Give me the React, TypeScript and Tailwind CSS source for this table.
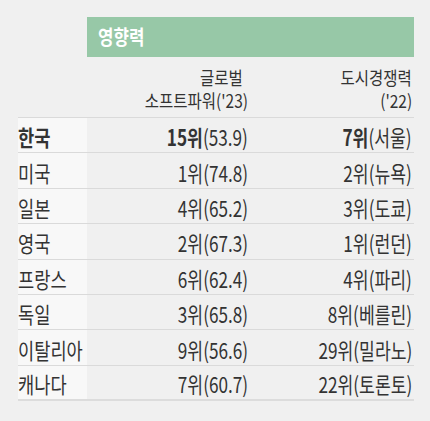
import React from "react";

const rows: [string, string, string, string, string][] = [
  ["한국", "15위", "(53.9)", "7위", "(서울)"],
  ["미국", "1위", "(74.8)", "2위", "(뉴욕)"],
  ["일본", "4위", "(65.2)", "3위", "(도쿄)"],
  ["영국", "2위", "(67.3)", "1위", "(런던)"],
  ["프랑스", "6위", "(62.4)", "4위", "(파리)"],
  ["독일", "3위", "(65.8)", "8위", "(베를린)"],
  ["이탈리아", "9위", "(56.6)", "29위", "(밀라노)"],
  ["캐나다", "7위", "(60.7)", "22위", "(토론토)"],
];

export default function App() {
  return (
    <div
      className="w-[430px] h-[421px] bg-[#f0f0f0] pt-[17px] pl-[18px] pr-[16px] text-[#333333]"
      style={{ fontFamily: '"Noto Sans CJK KR", "Noto Sans", sans-serif' }}
    >
      <div className="grid grid-cols-[69px_161px_166px]">
        <div />
        <div className="col-span-2 h-[40px] bg-[#97c8a7] flex items-center pl-[11px] text-white font-bold text-[20px]">
          <span className="inline-block scale-x-[0.84] origin-left whitespace-nowrap">영향력</span>
        </div>
        <div className="h-[60px]" />
        <div className="h-[60px] flex flex-col items-end gap-[1px] pt-[9px] text-[18px] leading-[22px]">
          <span className="inline-block scale-x-[0.86] origin-right whitespace-nowrap mr-[5px]">글로벌</span>
          <span className="inline-block scale-x-[0.86] origin-right whitespace-nowrap">소프트파워('23)</span>
        </div>
        <div className="h-[60px] flex flex-col items-end gap-[1px] pt-[9px] text-[18px] leading-[22px]">
          <span className="inline-block scale-x-[0.86] origin-right whitespace-nowrap mr-[2px]">도시경쟁력</span>
          <span className="inline-block scale-x-[0.86] origin-right whitespace-nowrap mr-[2px]">('22)</span>
        </div>
      </div>
      <div className="border-t border-[#dadada]">
        {rows.map((r, i) => {
          const bold = i === 0;
          const last = i === rows.length - 1;
          return (
            <div
              key={r[0]}
              className={`grid grid-cols-[69px_161px_166px] h-[35.4px] text-[22px] leading-[24px] ${
                last ? "border-b-2 border-[#dcdcdc]" : "border-b border-[#dadada]"
              }`}
            >
              <div className="bg-[#f8f8f8] flex items-center">
                <span
                  className={`inline-block scale-x-[0.8] origin-left whitespace-nowrap mt-[2px] ${
                    bold ? "font-bold" : ""
                  }`}
                >
                  {r[0]}
                </span>
              </div>
              <div className="flex items-center justify-end">
                <span className="inline-block scale-x-[0.78] origin-right whitespace-nowrap mt-[2px]">
                  <span className={bold ? "font-bold" : ""}>{r[1]}</span>
                  <span>{r[2]}</span>
                </span>
              </div>
              <div className="flex items-center justify-end">
                <span className="inline-block scale-x-[0.78] origin-right whitespace-nowrap mt-[2px] mr-[2px]">
                  <span className={bold ? "font-bold" : ""}>{r[3]}</span>
                  <span>{r[4]}</span>
                </span>
              </div>
            </div>
          );
        })}
      </div>
    </div>
  );
}
